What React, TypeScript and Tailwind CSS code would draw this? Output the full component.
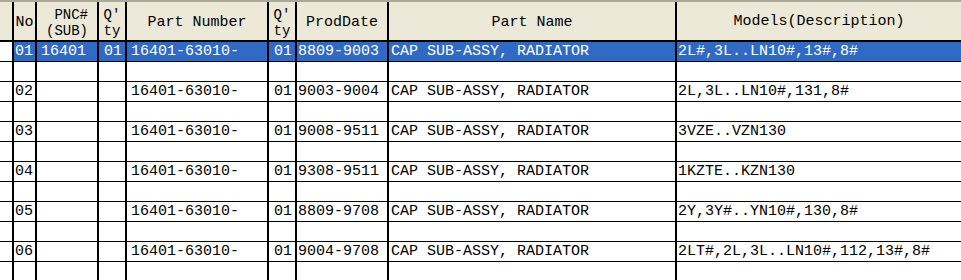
import React from 'react'

type Part = {
  no: string
  pnc: string
  qty: string
  partNo: string
  qty2: string
  date: string
  name: string
  models: string
}

const parts: Part[] = [
  { no: '01', pnc: '16401', qty: '01', partNo: '16401-63010-', qty2: '01', date: '8809-9003', name: 'CAP SUB-ASSY, RADIATOR', models: '2L#,3L..LN10#,13#,8#' },
  { no: '02', pnc: '', qty: '', partNo: '16401-63010-', qty2: '01', date: '9003-9004', name: 'CAP SUB-ASSY, RADIATOR', models: '2L,3L..LN10#,131,8#' },
  { no: '03', pnc: '', qty: '', partNo: '16401-63010-', qty2: '01', date: '9008-9511', name: 'CAP SUB-ASSY, RADIATOR', models: '3VZE..VZN130' },
  { no: '04', pnc: '', qty: '', partNo: '16401-63010-', qty2: '01', date: '9308-9511', name: 'CAP SUB-ASSY, RADIATOR', models: '1KZTE..KZN130' },
  { no: '05', pnc: '', qty: '', partNo: '16401-63010-', qty2: '01', date: '8809-9708', name: 'CAP SUB-ASSY, RADIATOR', models: '2Y,3Y#..YN10#,130,8#' },
  { no: '06', pnc: '', qty: '', partNo: '16401-63010-', qty2: '01', date: '9004-9708', name: 'CAP SUB-ASSY, RADIATOR', models: '2LT#,2L,3L..LN10#,112,13#,8#' },
]

const cell = 'shrink-0 border-r-2 border-black h-full overflow-hidden whitespace-pre pt-[1px]'

function Row({ p, selected }: { p?: Part; selected?: boolean }) {
  const tone = selected ? 'bg-[#316ac5] text-white' : 'bg-white text-black'
  return (
    <div className="flex h-[20px] border-b border-black leading-[18px]">
      <div className={`${cell} w-[14px] bg-white`} />
      <div className={`${cell} ${tone} w-[23px] pl-[1px]`}>{p?.no}</div>
      <div className={`${cell} ${tone} w-[62px] pl-[4px]`}>{p?.pnc}</div>
      <div className={`${cell} ${tone} w-[28px] pr-[3px] text-right`}>{p?.qty}</div>
      <div className={`${cell} ${tone} w-[142px] pl-[4px]`}>{p?.partNo}</div>
      <div className={`${cell} ${tone} w-[28px] pr-[3px] text-right`}>{p?.qty2}</div>
      <div className={`${cell} ${tone} w-[92px] pl-[1px]`}>{p?.date}</div>
      <div className={`${cell} ${tone} w-[288px] pl-[2px]`}>{p?.name}</div>
      <div className={`flex-1 h-full overflow-hidden whitespace-pre pl-[1px] pt-[1px] ${tone}`}>{p?.models}</div>
    </div>
  )
}

export default function App() {
  const head = 'shrink-0 border-r-2 border-black h-full flex flex-col items-center justify-center text-center leading-[15px] pt-[3px]'
  const twoLine = 'text-[14px] leading-[16px]'
  return (
    <div className="w-[961px] h-[280px] overflow-hidden bg-white text-[15px] text-black font-['Liberation_Mono',monospace]">
      {/* header */}
      <div className="flex h-[42px] border-t-2 border-[#aca899] border-b-2 border-b-black bg-[#ece9d8]">
        <div className={`${head} w-[14px]`} />
        <div className={`${head} w-[23px]`}>No</div>
        <div className={`${head} ${twoLine} w-[62px]`}>
          <span className="whitespace-pre">{'\u00a0PNC#'}</span>
          <span>(SUB)</span>
        </div>
        <div className={`${head} ${twoLine} w-[28px]`}>
          <span>Q'</span>
          <span>ty</span>
        </div>
        <div className={`${head} w-[142px]`}>Part Number</div>
        <div className={`${head} ${twoLine} w-[28px]`}>
          <span>Q'</span>
          <span>ty</span>
        </div>
        <div className={`${head} w-[92px]`}>ProdDate</div>
        <div className={`${head} w-[288px]`}>Part Name</div>
        <div className="flex-1 h-full flex items-center justify-center pt-[3px]">Models(Description)</div>
      </div>

      {parts.map((p, i) => (
        <React.Fragment key={p.no}>
          <Row p={p} selected={i === 0} />
          <Row />
        </React.Fragment>
      ))}
    </div>
  )
}
